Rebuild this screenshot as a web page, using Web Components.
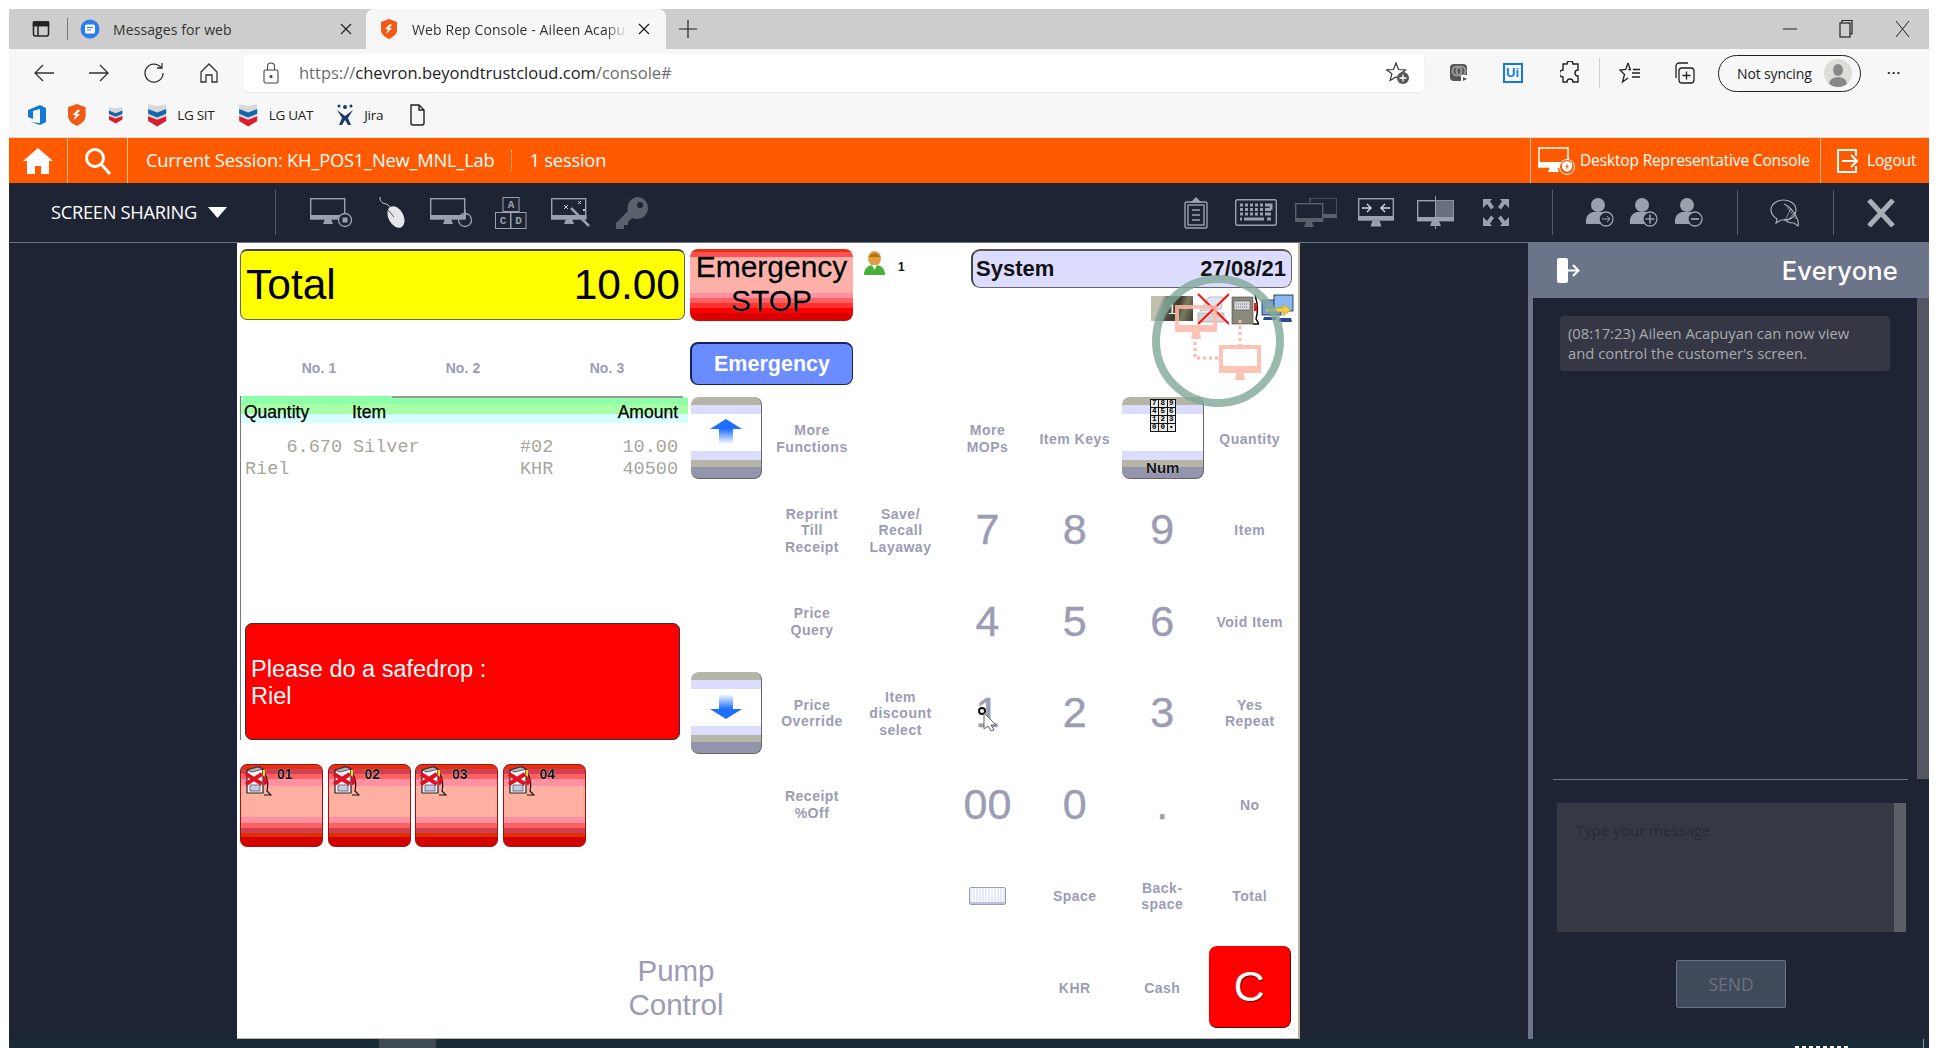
<!DOCTYPE html>
<html><head><meta charset="utf-8"><title>Web Rep Console</title>
<style>
html,body{margin:0;padding:0;background:#fff;width:1938px;height:1048px;overflow:hidden}
body{padding:9px 0 0 9px;box-sizing:border-box;font-family:"Open Sans",sans-serif}
</style></head><body>
<app-shell></app-shell>
<script>
function def(name,css,html){customElements.define(name,class extends HTMLElement{constructor(){super();this.attachShadow({mode:'open'}).innerHTML='<style>'+css+'</style>'+html;}});}

const chevron=(s=22)=>`<svg width="${s*.85}" height="${s}" viewBox="0 0 17 20"><path d="M1 1l7.500 1.500L16 1v14l-7.500 4.500L1 15z" fill="#d8d8d8"/><path d="M1 5l7.500 3L16 5v4l-7.500 3L1 9z" fill="#1266b0"/><path d="M1 11l7.500 3L16 11v4l-7.500 4.500L1 15z" fill="#d81e2c"/></svg>`;
const shield=(s=20)=>`<svg width="${s*.8}" height="${s}" viewBox="0 0 16 20"><path d="M8 0l8 3v8c0 4-3.500 7-8 9-4.500-2-8-5-8-9V3z" fill="#f05a14"/><path d="M9 5l-5 5h3l-2 5 6-6H8l3-3z" fill="#fff"/></svg>`;
const mon=(extra='',c='#9aa0ae')=>`<rect x=".7" y=".7" width="34" height="20" fill="none" stroke="${c}" stroke-width="1.400"/><rect x="0" y="17" width="35.400" height="4.500" fill="${c}"/><path d="M15 21h6l2 5H13z" fill="${c}"/>${extra}`;

def('chrome-glyph',':host{display:inline-flex;align-items:center;justify-content:center;width:55px;height:47px}','<slot></slot>');

def('tab-strip',`
:host{display:flex;height:40px;background:#cdcdcd;align-items:center;font:14px "Open Sans",sans-serif;color:#333;position:relative}
.side{width:59px;display:flex;justify-content:center;margin-left:2px;margin-right:-3px}
.sep{width:1px;height:22px;background:#777}
.tab{height:40px;display:flex;align-items:center;box-sizing:border-box;letter-spacing:.1px}
.t1{width:298px;padding-left:12px}
.t2{width:300px;background:#f7f7f7;border-radius:8px 8px 0 0;padding-left:15px}
.t{margin-left:13px;white-space:nowrap}
.t1 .t{width:216px}.t2 .t{margin-left:15px;width:215px;-webkit-mask:linear-gradient(90deg,#000 90%,transparent)}
.x{margin-left:10px;width:14px;height:14px;flex:none}
.plus{margin-left:13px}
.win{margin-left:auto;display:flex;align-items:center;gap:42px;padding-right:19px}
svg{display:block}
`,`
<div class="side"><svg width="20" height="20" viewBox="0 0 20 20" fill="none" stroke="#222" stroke-width="1.500"><rect x="2.500" y="3" width="15" height="14" rx="2"/><path d="M2.500 6.500h15M7 6.500V17"/><rect x="2.500" y="3" width="15" height="3.500" fill="#222"/></svg></div>
<div class="sep"></div>
<div class="tab t1"><svg width="20" height="20" viewBox="0 0 20 20"><circle cx="10" cy="10" r="9.500" fill="#2b7de9"/><rect x="5" y="5.500" width="10" height="9" rx="1.500" fill="#fff"/><path d="M7 8.500h6M7 11h4" stroke="#2b7de9"/></svg><span class="t">Messages for web</span>
<svg class="x" viewBox="0 0 14 14" stroke="#222" stroke-width="1.200"><path d="M2 2l10 10M12 2L2 12"/></svg></div>
<div class="tab t2">${shield(20)}<span class="t">Web Rep Console - Aileen Acapu</span>
<svg class="x" viewBox="0 0 14 14" stroke="#222" stroke-width="1.300"><path d="M2 2l10 10M12 2L2 12"/></svg></div>
<svg class="plus" width="18" height="18" viewBox="0 0 18 18" stroke="#222" stroke-width="1.200"><path d="M9 0v18M0 9h18"/></svg>
<div class="win">
<svg width="14" height="14" viewBox="0 0 14 14" stroke="#222"><path d="M0 7h14"/></svg>
<svg width="14" height="20" viewBox="0 0 14 20" fill="none" stroke="#222" stroke-width="1.200"><rect x="1" y="4" width="10" height="14"/><path d="M3 4V1.500h10V15h-2"/></svg>
<svg width="15" height="20" viewBox="0 0 15 20" stroke="#222" stroke-width="1"><path d="M1 2l13 16M14 2L1 18"/></svg>
</div>`);

def('nav-bar',`
:host{display:flex;height:47px;background:#f7f7f7;align-items:center;padding-left:7.500px;font:16.500px "Open Sans",sans-serif;color:#222}
chrome-glyph svg{fill:none;stroke:#333;stroke-width:1.300}
.addr{margin-left:7.500px;width:1180px;height:38px;background:#fff;border-radius:5px;display:flex;align-items:center;box-shadow:0 1px 2px #0000000f;letter-spacing:0;margin-top:1px}
.addr>span{padding-bottom:2px}
.g{color:#6c6c6c}.lock{margin:0 20px 0 19px}
.star{margin-left:auto;margin-right:14px}
.ext{display:flex;align-items:center}
.ext>*{flex:none}
.pill{margin-left:22px;width:143px;height:37px;border:1.500px solid #222;border-radius:19px;box-sizing:border-box;display:flex;align-items:center;padding-left:18px;font-size:14px;letter-spacing:-.15px;gap:9px;white-space:nowrap;margin-top:1px;flex:none}
.av{width:28px;height:28px;border-radius:50%;background:#dcdcd8;position:relative;overflow:hidden;flex:none;margin-left:3px}
.av:before{content:"";position:absolute;left:9px;top:5px;width:10px;height:12px;border-radius:50%;background:#888}
.av:after{content:"";position:absolute;left:5px;top:18px;width:18px;height:14px;border-radius:50%;background:#888}
.dots{margin-left:26px;font-weight:700;letter-spacing:1px;font-size:13px;line-height:1;margin-top:-1px}
`,`
<chrome-glyph><svg width="22" height="20" viewBox="0 0 22 20"><path d="M21 10H2M10 2l-8 8 8 8"/></svg></chrome-glyph>
<chrome-glyph><svg width="22" height="20" viewBox="0 0 22 20"><path d="M1 10h19M12 2l8 8-8 8"/></svg></chrome-glyph>
<chrome-glyph><svg width="22" height="22" viewBox="0 0 22 22"><path d="M18 5.500A9 9 0 1 0 20 11M19 1v5h-5"/></svg></chrome-glyph>
<chrome-glyph><svg width="22" height="22" viewBox="0 0 22 22"><path d="M3 10l8-8 8 8v10h-5v-7H8v7H3z"/></svg></chrome-glyph>
<div class="addr">
<svg class="lock" width="16" height="22" viewBox="0 0 16 22" fill="none" stroke="#444" stroke-width="1.100"><rect x="1" y="8" width="14" height="13" rx="1.500"/><path d="M4.500 8V4.500a3.500 3.500 0 0 1 7 0V8"/><circle cx="8" cy="14.500" r="1" fill="#444"/></svg>
<span><span class="g">https://</span>chevron.beyondtrustcloud.com<span class="g">/console#</span></span>
<svg class="star" width="24" height="24" viewBox="0 0 24 24"><path d="M10 2l2.500 6.500 7 .4-5.400 4.400 1.800 6.700L10 16l-5.900 3.500 1.800-6.700L.5 8.900l7-.4z" fill="none" stroke="#333" stroke-width="1.200"/><circle cx="17" cy="17" r="6" fill="#555"/><path d="M17 13.500v7M13.500 17h7" stroke="#fff" stroke-width="1.300"/></svg>
</div>
<div class="ext" style="margin-left:25px"><svg width="20" height="20" viewBox="0 0 20 20"><rect x="1" y="1" width="17" height="17" rx="4" fill="#555"/><circle cx="8" cy="8" r="4.500" fill="none" stroke="#999" stroke-width="2"/><circle cx="12" cy="8" r="4.500" fill="none" stroke="#999" stroke-width="2"/><rect x="12" y="12" width="8" height="8" fill="#f7f7f7"/><path d="M14 14l4 2-4 2z" fill="#555"/></svg></div>
<div class="ext" style="margin-left:34px"><svg width="20" height="20" viewBox="0 0 20 20"><rect width="20" height="20" fill="#1479e8"/><rect x="2" y="2" width="16" height="16" fill="#fff"/></svg><span style="margin-left:-17px;width:14px;font:700 13px 'Liberation Sans',sans-serif;color:#1479e8">Ui</span></div>
<div class="ext" style="margin-left:40px"><svg width="20" height="24" viewBox="0 0 20 24" fill="none" stroke="#222" stroke-width="1.400"><path d="M7 3a3 3 0 0 1 6 0h5v6a3 3 0 0 0 0 6v6h-5a3 3 0 0 0-6 0H3v-5a3 3 0 0 1 0-7V3z"/></svg></div>
<div class="ext" style="margin-left:19px;width:1px;height:30px;background:#d0d0d0"></div>
<div class="ext" style="margin-left:19px"><svg width="22" height="24" viewBox="0 0 22 24" fill="none" stroke="#222" stroke-width="1.300"><path d="M9 2l2.300 6.500h-2M14 8.500h7M13 12h8M13 16h8M9 2L6.700 8.500 1 9l4.500 4.500L3.500 21 9 17"/></svg></div>
<div class="ext" style="margin-left:31px"><svg width="24" height="24" viewBox="0 0 24 24" fill="none" stroke="#222" stroke-width="1.300"><rect x="7" y="7" width="15" height="15" rx="3"/><path d="M14.500 10.500v8M10.500 14.500h8M4 17V5a3 3 0 0 1 3-3h9"/></svg></div>
<div class="pill">Not syncing<span class="av"></span></div>
<span class="dots">···</span>`);

def('bookmark-bar',`
:host{display:flex;height:41px;background:#f7f7f7;align-items:center;font:13.500px "Open Sans",sans-serif;color:#222;letter-spacing:-.3px;padding-bottom:4px;box-sizing:border-box}
.i{display:flex;align-items:center;gap:10px;flex:none}
`,`
<span class="i" style="margin-left:18px"><svg width="20" height="22" viewBox="0 0 20 22"><path d="M13 1l6 3v14l-6 3-9-3 9 1V5L6 7v8L1 13V6z" fill="#1479d0"/></svg></span>
<span class="i" style="margin-left:21px">${shield(22)}</span>
<span class="i" style="margin-left:22px">${chevron(18)}</span>
<span class="i" style="margin-left:24px">${chevron(24)}LG SIT</span>
<span class="i" style="margin-left:24px">${chevron(24)}LG UAT</span>
<span class="i" style="margin-left:23px"><svg width="18" height="22" viewBox="0 0 18 22" fill="#1b3a6b"><circle cx="9" cy="3" r="2"/><circle cx="3" cy="2" r="1.500"/><circle cx="15" cy="2" r="1.500"/><path d="M1 6l8 6 8-6-5 8 3 7h-3l-3-5-3 5H3l3-7z"/></svg>Jira</span>
<span class="i" style="margin-left:26px"><svg width="17" height="22" viewBox="0 0 17 22" fill="none" stroke="#222" stroke-width="1.400"><path d="M2 1h8l5 5v13a2 2 0 0 1-2 2H4a2 2 0 0 1-2-2zM10 1v5h5"/></svg></span>`);

def('session-bar',`
:host{display:flex;height:46px;border-top:1px solid #d8d8d8;background:#ff5a00;color:#fff;align-items:center;font:18.300px "Open Sans",sans-serif;letter-spacing:-.2px;white-space:nowrap;box-sizing:border-box}
.c{height:100%;display:flex;align-items:center;border-right:1px solid #ffb98f;box-sizing:border-box;flex:none}
.tx{padding-bottom:2px}
.dot{border-right:1px dotted #ffd0b0;height:22px;margin:0 18px 0 16px}
.end{margin-left:auto;display:flex;height:100%;align-items:center;font-size:15.500px;letter-spacing:-.15px;width:399px;flex:none}
`,`
<div class="c" style="width:59px;justify-content:center"><svg width="30" height="26" viewBox="0 0 30 26" fill="#fff"><path d="M15 0L0 13h4v13h8v-8h6v8h8V13h4z"/></svg></div>
<div class="c" style="width:60px;justify-content:center"><svg width="28" height="28" viewBox="0 0 28 28" fill="none" stroke="#fff" stroke-width="3"><circle cx="11" cy="11" r="8.500"/><path d="M17 17l9 10"/></svg></div>
<span class="tx" style="margin-left:18px">Current Session: KH_POS1_New_MNL_Lab</span><span class="dot"></span><span class="tx">1 session</span>
<div class="end">
<div class="c" style="border-left:1px solid #ffb98f;border-right:1px solid #ffb98f;width:291px;padding-left:7px;gap:5px"><svg width="37" height="28" viewBox="0 0 37 28"><rect x="1" y="1" width="29" height="19" fill="none" stroke="#fff" stroke-width="1.500"/><rect x="0" y="15" width="31" height="5" fill="#fff"/><path d="M12 20h7l2 5H10z" fill="#fff"/><circle cx="29" cy="20" r="7.500" fill="#ff5a00" stroke="#fff"/><path d="M29 14l5 2v4c0 2-2 4-5 5-3-1-5-3-5-5v-4z" fill="#fff"/><path d="M30 16l-3 4h2l-1 3 3-4h-2z" fill="#ff5a00"/></svg><span class="tx">Desktop Representative Console</span></div>
<div style="display:flex;align-items:center;gap:9px;padding-left:15px"><svg width="22" height="26" viewBox="0 0 22 26" fill="none" stroke="#fff" stroke-width="2"><path d="M20 8V2H2v22h18v-6M6 13h15M15 7l6 6-6 6"/></svg><span class="tx">Logout</span></div>
</div>`);

def('work-toolbar',`
:host{display:flex;height:60px;box-sizing:border-box;background:#1e2433;border-bottom:1px solid #6c7489;color:#fff;align-items:center;font:18.300px "Open Sans",sans-serif;letter-spacing:-.3px}
svg{flex:none;display:block}
.sep{width:1px;height:45px;background:#555c6c;flex:none}
text{font:700 11px "Liberation Mono",monospace;fill:#9aa0ae}
`,`
<span style="margin-left:42px;white-space:nowrap;padding-bottom:2px">SCREEN SHARING</span>
<svg style="margin-left:11px" width="19" height="11" viewBox="0 0 19 11"><path d="M0 0h19L9.500 11z" fill="#fff"/></svg>
<div class="sep" style="margin-left:48px"></div>
<svg style="margin-left:34px" width="42" height="30" viewBox="0 0 42 30">${mon()}<circle cx="35" cy="22" r="6.500" fill="#1e2433" stroke="#9aa0ae" stroke-width="1.300"/><rect x="32.500" y="19.500" width="5" height="5" fill="#9aa0ae"/></svg>
<svg style="margin-left:27px" width="28" height="32" viewBox="0 0 28 32"><path d="M1 0c0 6 3 6 6 7s4 3 5 5" fill="none" stroke="#c8ccd4"/><ellipse cx="17" cy="20" rx="7.500" ry="11.500" transform="rotate(-28 17 20)" fill="#e4e6ea"/><path d="M9 13l6 7" stroke="#555"/></svg>
<svg style="margin-left:23px" width="42" height="30" viewBox="0 0 42 30">${mon()}<circle cx="35" cy="22" r="6.500" fill="none" stroke="#9aa0ae" stroke-width="1.300"/><path d="M35 12v9" stroke="#9aa0ae" stroke-width="1.600"/></svg>
<svg style="margin-left:23px" width="32" height="32" viewBox="0 0 32 32" fill="none" stroke="#9aa0ae"><rect x="8" y=".5" width="16" height="14"/><rect x=".5" y="15.500" width="15" height="16"/><rect x="16" y="15.500" width="15" height="16"/><text x="16" y="11" text-anchor="middle" stroke="none">A</text><text x="8" y="27" text-anchor="middle" stroke="none">C</text><text x="23.500" y="27" text-anchor="middle" stroke="none">D</text></svg>
<svg style="margin-left:24px" width="40" height="30" viewBox="0 0 40 30">${mon()}<path d="M20 10l18 18" stroke="#9aa0ae" stroke-width="2.500"/><path d="M13 7l4 4M17 7l-4 4M27 3l3 3M30 3l-3 3M32 11l2 2M34 11l-2 2" stroke="#c8ccd4"/></svg>
<svg style="margin-left:25px" width="33" height="32" viewBox="0 0 33 32"><path d="M21 0a11 11 0 0 1 0 22 11 11 0 0 1-5-1l-4 4v3H8v4H0v-6l12-12a11 11 0 0 1 9-14z" fill="#5b606d"/><circle cx="24" cy="8" r="3" fill="#1e2433"/></svg>
<svg style="margin-left:535px" width="24" height="32" viewBox="0 0 24 32" fill="none" stroke="#9aa0ae" stroke-width="1.400"><rect x="1" y="5" width="22" height="26" rx="1.500"/><path d="M8 5l4-4 4 4z" fill="#9aa0ae"/><rect x="4" y="8" width="16" height="20"/><path d="M8 13h8M8 18h8M8 23h8"/></svg>
<svg style="margin-left:27px" width="42" height="27" viewBox="0 0 42 27"><rect x=".7" y=".7" width="40.600" height="25.600" rx="1.500" fill="none" stroke="#9aa0ae" stroke-width="1.400"/><path d="M5 6h3M10 6h3M15 6h3M20 6h3M25 6h3M30 6h3M5 10.500h3M10 10.500h3M15 10.500h3M20 10.500h3M25 10.500h3M30 10.500h6M33 6h3v5M5 15h3M10 15h3M15 15h3M20 15h3M25 15h3M30 15h6M9 20h20M32 20h4M5 20h2" stroke="#9aa0ae" stroke-width="3"/></svg>
<svg style="margin-left:18px" width="42" height="30" viewBox="0 0 42 30" fill="#5b606d"><rect x="15" y="0" width="27" height="19" fill="none" stroke="#5b606d" stroke-width="1.400"/><rect x="15" y="16" width="27" height="4"/><rect x=".7" y="5.700" width="27" height="17" fill="#1e2433" stroke="#5b606d" stroke-width="1.400"/><rect x="0" y="20" width="28" height="4"/><path d="M11 24h6l2 5H9z"/></svg>
<svg style="margin-left:21px" width="36" height="29" viewBox="0 0 36 29" fill="#9aa0ae"><rect x=".7" y=".7" width="34.600" height="21" fill="none" stroke="#9aa0ae" stroke-width="1.400"/><rect y="18" width="36" height="4.500"/><path d="M14.500 22.500h7l2 6h-11z"/><path d="M4 10h9M9 6l4 4-4 4M32 10h-9M27 6l-4 4 4 4" stroke="#d5d8de" stroke-width="1.400" fill="none"/></svg>
<svg style="margin-left:23px" width="37" height="33" viewBox="0 0 37 33" fill="#9aa0ae"><rect x=".7" y="4.700" width="35.600" height="20" fill="none" stroke="#9aa0ae" stroke-width="1.400"/><rect x="18.500" y="4.700" width="17.800" height="20" fill="#6b7080"/><rect y="21" width="37" height="4"/><path d="M18.500 0v33" stroke="#9aa0ae"/><path d="M15 25h7l2 5H13z"/></svg>
<svg style="margin-left:29px" width="26" height="27" viewBox="0 0 26 27" fill="#9aa0ae"><path d="M0 0h9L7 2.500 11 8 8 10.500 4 5 0 9zM26 0h-9l2 2.500L15 8l3 2.500L22 5l4 4zM0 27h9l-2-2.500 4-5.500-3-2.500L4 22l-4-4zM26 27h-9l2-2.500-4-5.500 3-2.500 4 5.500 4-4z"/></svg>
<div class="sep" style="margin-left:43px"></div>
<svg style="margin-left:32px" width="29" height="30" viewBox="0 0 29 30"><ellipse cx="13" cy="7" rx="7" ry="7" fill="#9aa0ae"/><path d="M1 26c-1-8 3-11 7-12h9c4 1 6 4 6 12z" fill="#9aa0ae"/><circle cx="21" cy="21" r="7" fill="#1e2433" stroke="#9aa0ae" stroke-width="1.300"/><path d="M17 21h8M22 18l3 3-3 3" stroke="#9aa0ae" fill="none"/></svg>
<svg style="margin-left:15px" width="29" height="30" viewBox="0 0 29 30"><ellipse cx="13" cy="7" rx="7" ry="7" fill="#9aa0ae"/><path d="M1 26c-1-8 3-11 7-12h9c4 1 6 4 6 12z" fill="#9aa0ae"/><circle cx="21" cy="21" r="7" fill="#1e2433" stroke="#9aa0ae" stroke-width="1.300"/><path d="M16.500 21h9M21 16.500v9" stroke="#9aa0ae" stroke-width="1.600"/></svg>
<svg style="margin-left:16px" width="30" height="30" viewBox="0 0 30 30"><ellipse cx="13" cy="7" rx="7" ry="7" fill="#9aa0ae"/><path d="M1 26c-1-8 3-11 7-12h9c4 1 6 4 6 12z" fill="#9aa0ae"/><circle cx="21" cy="21" r="7" fill="#1e2433" stroke="#9aa0ae" stroke-width="1.300"/><path d="M17 21h8" stroke="#9aa0ae" stroke-width="1.800"/></svg>
<div class="sep" style="margin-left:33px"></div>
<svg style="margin-left:32px" width="30" height="28" viewBox="0 0 30 28" fill="none" stroke="#aeb2bc" stroke-width="1.100"><path d="M14 1C7 1 1 5 1 11c0 4 3 7 6 9l-1 4 5-3h3c7 0 12-4 12-10S20 1 14 1z"/><path d="M14 5c5 2 9 6 13 14 1 3 2 6 1 8l-4-3c-4 0-8-1-10-4" /><path d="M17 8l9 12M21 9l-6 13M25 13l-8 9" stroke-width=".7"/></svg>
<div class="sep" style="margin-left:33px"></div>
<svg style="margin-left:33px" width="28" height="28" viewBox="0 0 28 28" stroke="#a8adb8" stroke-width="5"><path d="M2 1l24 26M26 1L2 27"/></svg>`);

const keyBg='linear-gradient(#b5b5a8 0 8px,#dcdcfc 8px 17px,#fff 17px 54px,#dcdcfc 54px 63px,#b5b5a8 63px 70px,#9494ac 70px)';
def('arrow-key',`
:host{width:71px;height:82px;border:1px solid #666;border-width:0 1px 1px 0;border-radius:8px;box-sizing:border-box;justify-self:center;align-self:center;display:flex;align-items:center;justify-content:center;background:${keyBg}}
svg{display:block;margin-top:-12px}
`,`<svg width="32" height="25" viewBox="0 0 32 25"><defs><linearGradient id="a" x1="0" y1="0" x2="0" y2="1"><stop offset="0" stop-color="#1f6fff"/><stop offset="1" stop-color="#fff"/></linearGradient></defs><path d="M9 10h14v15H9z" fill="url(#a)"/><path d="M16 0l16 10H0z" fill="#1f6fff"/></svg>`);
def('arrow-key-down',`
:host{width:71px;height:82px;border:1px solid #666;border-width:0 1px 1px 0;border-radius:8px;box-sizing:border-box;justify-self:center;align-self:center;display:flex;align-items:center;justify-content:center;background:${keyBg}}
svg{display:block;margin-top:-12px}
`,`<svg width="32" height="25" viewBox="0 0 32 25"><defs><linearGradient id="a" x1="0" y1="1" x2="0" y2="0"><stop offset="0" stop-color="#1f6fff"/><stop offset="1" stop-color="#fff"/></linearGradient></defs><path d="M9 0h14v15H9z" fill="url(#a)"/><path d="M16 25L32 15H0z" fill="#1f6fff"/></svg>`);

def('pos-key',`
:host{display:flex;align-items:center;justify-content:center;text-align:center;color:#9c9cb4;font:700 14px/16.500px "Liberation Sans",sans-serif;letter-spacing:.5px;white-space:pre-line;padding-top:1px;box-sizing:border-box}
:host([big]){font:400 43px/1 "Liberation Sans",sans-serif;letter-spacing:0;padding-top:0;-webkit-text-stroke:.4px #9c9cb4}
`,`<slot></slot>`);

def('pump-tile',`
:host{width:83px;height:83px;border-radius:7px;box-sizing:border-box;border:1px solid #a01010;position:relative;font:700 14px "Liberation Sans",sans-serif;color:#111;
background:linear-gradient(#e83010 0 4px,#d04050 4px 9px,#ff6060 9px 14px,#ff90a0 14px 21px,#ffb0a0 21px 52px,#ff90a0 52px 58px,#ff6060 58px 63px,#d04050 63px 68px,#e03000 68px 72px,#d40000 72px);
display:flex;padding:1px 0 0 4px}
span{margin:0 0 0 5px;text-shadow:0 0 1px #fff}
`,`<svg width="27" height="30" viewBox="0 0 27 30"><path d="M2 4l11-3 5 2v24H2z" fill="#f4f4f8" stroke="#222" stroke-width="1.200"/><path d="M2 4l11-3 5 2-11 3z" fill="#b8b8c4" stroke="#222" stroke-width=".7"/><rect x="5" y="19" width="10" height="6" fill="#c8c8e8" stroke="#444" stroke-width=".7"/><path d="M18 6c6 6 5 14 4 19l4 4h-7" fill="none" stroke="#111" stroke-width="1.200"/><path d="M18 4h2v6h-2z" fill="#e8d020"/><path d="M1 8l16 10M17 8L1 18" stroke="#e01020" stroke-width="4"/><path d="M18 11a4 4 0 0 1 1 8z" fill="#e01020"/></svg><span><slot></slot></span>`);

def('item-list',`
:host{display:block;height:344px;box-sizing:border-box;border-left:1px solid #777;position:relative;font-family:"Liberation Sans",sans-serif}
.h{height:27px;display:grid;grid-template-columns:108px 1fr auto;align-items:end;padding:0 10px 0 3px;font-size:17.500px;line-height:21px;color:#000;-webkit-text-stroke:.25px #000;border-radius:6px 0 0 0;
background:linear-gradient(#8cffa8 0 6px,#a8ffa8 6px 16px,#d8ffff 16px);border-top:2px solid;border-image:linear-gradient(90deg,#8cffa8 0 151px,#999 151px 441px,transparent 441px) 1;box-sizing:border-box;margin-right:-2px}
.r{display:grid;grid-template-columns:108px 167px 1fr auto;padding:0 8px 0 4px;font:18.500px/22px "Liberation Mono",monospace;color:#a6a69c;white-space:pre}
.rows{padding-top:14px}
.n{text-align:right;padding-right:11px}
.m{position:absolute;left:4px;bottom:0;width:435px;height:117px;background:#f00;border:1px solid #333;border-radius:7px;box-sizing:border-box;color:#fff;font:23.500px/27px "Liberation Sans",sans-serif;padding:32px 5px}
`,`
<div class="h"><span>Quantity</span><span>Item</span><span>Amount</span></div>
<div class="rows">
<div class="r"><span class="n">6.670</span><span>Silver</span><span>#02</span><span>10.00</span></div>
<div class="r"><span>Riel</span><span></span><span>KHR</span><span>40500</span></div>
</div>
<div class="m">Please do a safedrop :<br>Riel</div>`);

def('status-row',`
:host{display:flex;align-items:flex-start;justify-content:flex-end;margin-right:-2px;height:32px;padding-top:5px;box-sizing:border-box}
.b{width:42px;height:25px;margin-top:3px;background:linear-gradient(110deg,#c0c0b0 0 22%,#555548 40%,#3c3c30 60%,#7c7c60 75%,#3c3c30);color:#fff;font:15px/25px "Liberation Sans",sans-serif;text-align:center;margin-right:4px}
svg{display:block}
`,`<div class="b">1</div>
<svg width="32" height="32" viewBox="0 0 32 32" style="margin-right:2px"><path d="M3 18l9-14h14l-2 12z" fill="#dce8f4" stroke="#999" stroke-width=".6"/><path d="M1 20h26v9H1z" fill="#d4d4d8" stroke="#999" stroke-width=".6"/><path d="M1 1l31 30M32 1L1 31" stroke="#ff1010" stroke-width="2"/></svg>
<svg width="28" height="32" viewBox="0 0 28 32" style="margin-right:2px"><rect x="1" y="4" width="21" height="27" fill="#8a8a7a" stroke="#444" stroke-width=".6"/><rect x="3" y="8" width="16" height="9" fill="#d8d8dc" stroke="#555" stroke-width=".6"/><path d="M5 11h12M5 14h12" stroke="#777" stroke-dasharray="1 1"/><path d="M24 2c3 9 3 17 1 24l3 5h-6" fill="none" stroke="#111" stroke-width="1.500"/><path d="M23 10h3v8h-3z" fill="#d82020"/></svg>
<svg width="33" height="32" viewBox="0 0 33 32"><rect x="1" y="7" width="19" height="15" fill="#6aa0e8" stroke="#123" stroke-width=".8"/><rect x="13" y="2" width="19" height="16" fill="#8ab8f0" stroke="#123" stroke-width=".8"/><path d="M5 15h17v-4l8 6-8 6v-4H5z" fill="#f0d040" stroke="#a08020" stroke-width=".5"/><path d="M3 24h12l1 3H2zM18 25h12l1 4H17z" fill="#2a4a90"/></svg>`);

def('pos-panel',`
:host{display:grid;width:1063px;height:796px;flex:none;background:#fff;border-right:2px solid #b8b4a0;border-bottom:1px solid #b8b4a0;box-sizing:border-box;position:relative;overflow:hidden;
grid-template-columns:3px 446px 81px 90px 87px 87px 87.500px 87.500px 87.500px 1fr;grid-template-rows:149.500px repeat(7,91.500px) 1fr}
.top{grid-column:2/-1;grid-row:1;display:flex;padding-top:6px;font-family:"Liberation Sans",sans-serif}
.left{width:450px}
.total{width:445px;height:71px;background:#ff0;border:1px solid #666;border-top:2px solid #444;border-radius:7px;box-sizing:border-box;display:flex;justify-content:space-between;align-items:center;font-size:42.500px;padding:0 4px 0 5px;color:#000}
.nos{display:flex;color:#9c9cb4;font-weight:700;font-size:14px;margin-top:40px;letter-spacing:.1px}
.nos span{width:144px;text-align:center;flex:none}
.mid{width:163px}
.stop{height:72px;box-sizing:border-box;border-radius:8px;text-align:center;font-size:30px;line-height:34px;color:#000;padding-top:1px;text-shadow:0 0 1px #fff;-webkit-text-stroke:.3px #000;
background:linear-gradient(#e83010 0 3px,#ff5050 3px 8px,#ffb0a8 8px 44px,#ff90a0 44px 49px,#ff6060 49px 54px,#ff3030 54px 59px,#f00 59px 64px,#d80000 64px);}
.em{margin-top:21px;height:43px;box-sizing:border-box;background:#6a8cff;border:1px solid #14206a;border-width:2px 1px 1px 2px;border-radius:8px;color:#fff;font:700 21.500px/40px "Liberation Sans",sans-serif;text-align:center}
.p{margin:0 0 0 11px;width:107px;display:flex;align-items:flex-start;gap:13px;font-weight:700;font-size:12px;padding-top:2px;color:#111}
.p span{margin-top:9px}
.sys{width:321px}
.bar{height:39px;box-sizing:border-box;background:#dcdcff;border:1px solid #666;border-top:2px solid #555;border-left:2px solid #444;border-radius:9px;display:flex;justify-content:space-between;align-items:center;font-weight:700;font-size:22px;padding:0 5px 0 3px;color:#111}
.lc{grid-column:2;grid-row:2/8;padding-top:3.500px}
.tiles{display:flex;gap:4.500px;margin-top:24px}
.pc{grid-column:2/4;grid-row:8;font:29.500px/34.500px "Liberation Sans",sans-serif;color:#9c9cb4;text-align:center;width:200px;margin-left:336px;margin-top:2px;align-self:center}
.numb{width:82px;height:82px;justify-self:center;align-self:center;box-sizing:border-box;border:1px solid #666;border-width:0 1.500px 1.500px 0;border-radius:8px;background:${keyBg};display:flex;flex-direction:column;align-items:center;font:700 15px "Liberation Sans",sans-serif;color:#111;margin-left:2px}
.pad{display:grid;grid-template-columns:repeat(3,7.500px);gap:1px;margin-top:2px;font:700 7.500px/7px "Liberation Mono",monospace;text-align:center;background:#111;padding:1px}
.pad i{font-style:normal;background:#e8e8e8;height:7px;color:#000}
.numb b{margin-top:auto;padding-bottom:2px;line-height:17px;font-weight:700;text-shadow:0 0 1px #fff}
.c{width:82px;height:82px;justify-self:center;align-self:center;background:#f00;border-radius:8px;border:1px solid #600;border-width:0 1px 1px 0;box-sizing:border-box;color:#fff;font:43px/80px "Liberation Sans",sans-serif;text-align:center;text-shadow:1px 1px 1px #700}
.kb{width:37px;height:18px;box-sizing:border-box;border:1px solid #9c9cc4;border-radius:2px;background:repeating-linear-gradient(90deg,#e8e8ff 0 2px,#fff 2px 3px);box-shadow:inset 0 -2px #c0c0e0}
.ov{position:absolute;left:0;top:0;pointer-events:none}
`,`
<div class="top">
<div class="left"><div class="total"><span>Total</span><span>10.00</span></div>
<div class="nos" style="margin-left:7px"><span>No. 1</span><span>No. 2</span><span>No. 3</span></div></div>
<div class="mid"><div class="stop">Emergency<br>STOP</div><div class="em">Emergency</div></div>
<div class="p"><svg width="21" height="25" viewBox="0 0 21 25"><ellipse cx="10.500" cy="7.500" rx="6.500" ry="7.500" fill="#e0a040"/><path d="M5 6c2-5 9-5 11 0z" fill="#b06c18"/><path d="M0 24c0-7 4-10 10.500-10S21 17 21 24z" fill="#48b038"/><path d="M8 14l2.500 5 2.500-5z" fill="#fff"/></svg><span>1</span></div>
<div class="sys"><div class="bar"><span>System</span><span>27/08/21</span></div><status-row></status-row></div>
</div>

<div class="lc"><item-list></item-list>
<div class="tiles"><pump-tile>01</pump-tile><pump-tile>02</pump-tile><pump-tile>03</pump-tile><pump-tile>04</pump-tile></div></div>
<div class="pc">Pump<br>Control</div>

<arrow-key style="grid-area:2/3"></arrow-key>
<pos-key style="grid-area:2/4">More
Functions</pos-key>
<pos-key style="grid-area:2/6">More
MOPs</pos-key>
<pos-key style="grid-area:2/7">Item Keys</pos-key>
<div class="numb" style="grid-area:2/8"><div class="pad"><i>7</i><i>8</i><i>9</i><i>4</i><i>5</i><i>6</i><i>1</i><i>2</i><i>3</i><i>0</i><i>0</i><i>•</i></div><b>Num</b></div>
<pos-key style="grid-area:2/9">Quantity</pos-key>

<pos-key style="grid-area:3/4">Reprint
Till
Receipt</pos-key>
<pos-key style="grid-area:3/5">Save/
Recall
Layaway</pos-key>
<pos-key big style="grid-area:3/6">7</pos-key><pos-key big style="grid-area:3/7">8</pos-key><pos-key big style="grid-area:3/8">9</pos-key>
<pos-key style="grid-area:3/9">Item</pos-key>

<pos-key style="grid-area:4/4">Price
Query</pos-key>
<pos-key big style="grid-area:4/6">4</pos-key><pos-key big style="grid-area:4/7">5</pos-key><pos-key big style="grid-area:4/8">6</pos-key>
<pos-key style="grid-area:4/9">Void Item</pos-key>

<arrow-key-down style="grid-area:5/3"></arrow-key-down>
<pos-key style="grid-area:5/4">Price
Override</pos-key>
<pos-key style="grid-area:5/5">Item
discount
select</pos-key>
<pos-key big style="grid-area:5/6">1</pos-key><pos-key big style="grid-area:5/7">2</pos-key><pos-key big style="grid-area:5/8">3</pos-key>
<pos-key style="grid-area:5/9">Yes
Repeat</pos-key>

<pos-key style="grid-area:6/4">Receipt
%Off</pos-key>
<pos-key big style="grid-area:6/6">00</pos-key><pos-key big style="grid-area:6/7">0</pos-key><pos-key big style="grid-area:6/8">.</pos-key>
<pos-key style="grid-area:6/9">No</pos-key>

<pos-key style="grid-area:7/6"><div class="kb"></div></pos-key>
<pos-key style="grid-area:7/7">Space</pos-key>
<pos-key style="grid-area:7/8">Back-
space</pos-key>
<pos-key style="grid-area:7/9">Total</pos-key>

<pos-key style="grid-area:8/7">KHR</pos-key>
<pos-key style="grid-area:8/8">Cash</pos-key>
<div class="c" style="grid-area:8/9">C</div>

<svg class="ov" width="1063" height="796" viewBox="237 243 1063 796">
<circle cx="1218" cy="341" r="62" fill="none" stroke="#7fa898" stroke-width="8" opacity=".8"/>
<g fill="#ffb8a8" fill-opacity=".85"><path fill-rule="evenodd" d="M1175 305h42v27h-42zM1179 309v16h34v-16z"/><path d="M1192 332h8l1 7h-10z"/>
<path fill-rule="evenodd" d="M1219 345h42v28h-42zM1223 349v17h34v-17z"/><path d="M1236 373h8l1 7h-10z"/></g>
<path d="M1195 342v16h24M1240 320v25" fill="none" stroke="#ffb8a8" stroke-width="3" stroke-dasharray="3 3"/>
<circle cx="982" cy="711" r="3" fill="#fff" stroke="#111" stroke-width="2"/>
<path d="M984 713v16l4-3 3 5 3-1-3-5h5z" fill="#fff" stroke="#666" stroke-width="1"/>
</svg>`);

def('chat-panel',`
:host{display:flex;flex-direction:column;width:401px;height:796px;flex:none;box-sizing:border-box;border-left:5px solid #6c7489;background:#1e2433;font-family:"Open Sans",sans-serif}
.hd{height:55px;margin-left:-5px;background:#6c7489;display:flex;align-items:center;justify-content:space-between;padding:0 31px 0 29px;color:#fff;font:500 25.500px Inter,sans-serif;letter-spacing:.2px;flex:none}
.msgs{height:481px;display:flex;flex:none}
.area{flex:1;padding:18px 0 0 27px}
.card{width:330px;height:55px;box-sizing:border-box;background:#353844;border-radius:4px;padding:7px 30px 7px 8px;color:#a9abb1;font-size:14.800px;line-height:20px}
.sb{width:12px;background:#545761}
hr{border:0;border-top:1px solid #6c7489;margin:0 21px 0 20px}
.ta{margin:23px 0 0 24px;width:349px;height:129px;background:#363944;display:flex;justify-content:space-between;box-sizing:border-box;color:#272a35;font-size:15px;flex:none}
.ta span{padding:17px 0 0 19px}
.ta i{width:12px;background:#5c5e68}
.btn{margin:28px 0 0 143px;width:110px;height:48px;box-sizing:border-box;background:#404a5a;border:1px solid #6c7489;border-radius:2px;color:#6b7280;font-size:17.500px;line-height:46px;text-align:center}
`,`
<div class="hd"><svg width="23" height="25" viewBox="0 0 23 25"><rect width="11" height="25" rx="2" fill="#fff"/><path d="M11 12.500h10M16 7l5.500 5.500L16 18" fill="none" stroke="#fff" stroke-width="2"/></svg>Everyone</div>
<div class="msgs"><div class="area"><div class="card">(08:17:23) Aileen Acapuyan can now view and control the customer's screen.</div></div><div class="sb"></div></div>
<hr>
<div class="ta"><span>Type your message</span><i></i></div>
<div class="btn">SEND</div>`);

def('task-strip',`
:host{display:block;height:9px;background:#1a2b38;position:relative;overflow:hidden}
.t{width:57px;height:9px;background:#3f4c56;margin-left:370px}
.c{position:absolute;left:1786px;top:7px;width:53px;height:2px;background:repeating-linear-gradient(90deg,#fff 0 4px,transparent 4px 7px)}
.l{position:absolute;left:1914px;top:0;width:1px;height:9px;background:#8a98a4}
`,`<div class="t"></div><div class="c"></div><div class="l"></div>`);

def('app-shell',`
:host{display:flex;flex-direction:column;width:1920px;height:1039px;overflow:hidden}
.main{display:flex;background:#1e2433;height:796px;flex:none}
`,`
<tab-strip></tab-strip><nav-bar></nav-bar><bookmark-bar></bookmark-bar><session-bar></session-bar><work-toolbar></work-toolbar>
<div class="main"><div style="width:228px;flex:none"></div><pos-panel></pos-panel><div style="width:228px;flex:none"></div><chat-panel></chat-panel></div>
<task-strip></task-strip>`);
</script>
</body></html>
